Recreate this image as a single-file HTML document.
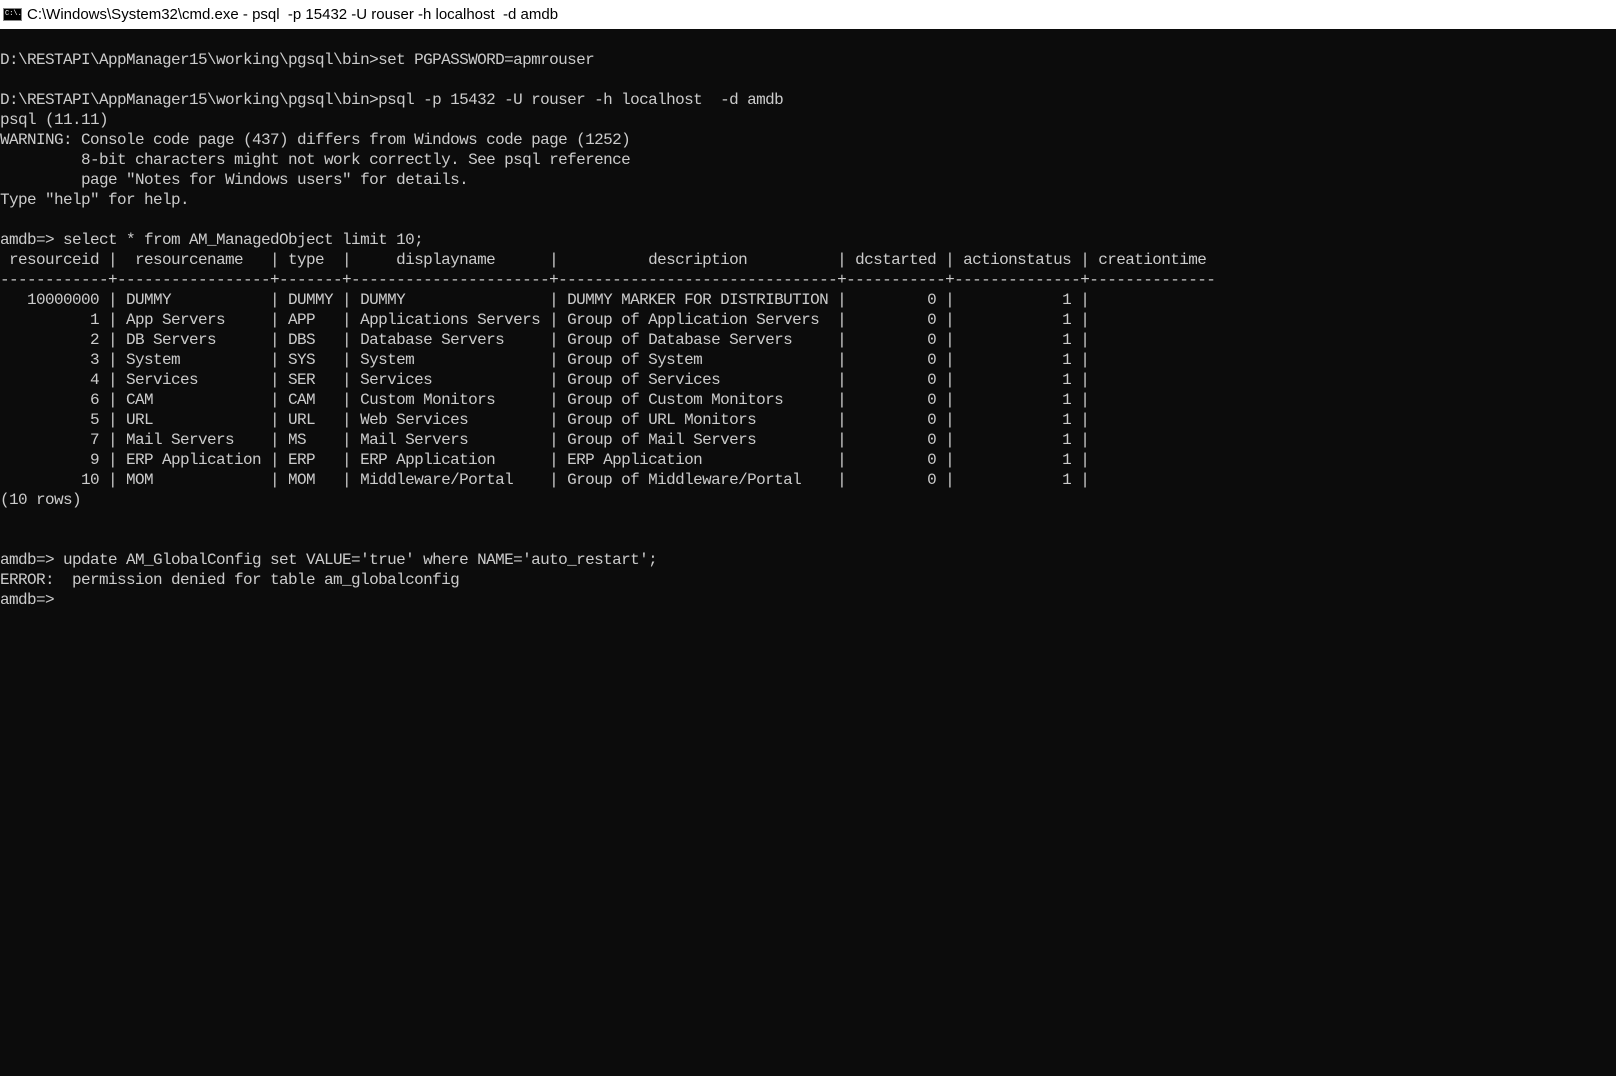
<!DOCTYPE html>
<html><head><meta charset="utf-8"><style>
html,body{margin:0;padding:0;width:1616px;height:1076px;background:#0c0c0c;overflow:hidden}
.title{position:absolute;left:0;top:0;width:1616px;height:29px;background:#fff;font-family:"Liberation Sans",sans-serif;font-size:15px;color:#000;line-height:29px}
.title span{position:absolute;left:27px;top:0}
.icon{position:absolute;left:3px;top:8px;width:19px;height:13px;background:#000;border:1px solid #888;box-sizing:border-box}
.icon:after{content:"C:\\.";position:absolute;left:1px;top:-9px;color:#fff;font-size:7px;font-family:"Liberation Mono",monospace}
pre{position:absolute;left:0;top:30px;margin:0;font-family:"Liberation Mono",monospace;font-size:16px;letter-spacing:-0.6px;line-height:20px;color:#cccccc;white-space:pre}
</style></head><body>
<div class="title"><div class="icon"></div><span>C:\Windows\System32\cmd.exe - psql&nbsp; -p 15432 -U rouser -h localhost&nbsp; -d amdb</span></div>
<pre>

D:\RESTAPI\AppManager15\working\pgsql\bin&gt;set PGPASSWORD=apmrouser

D:\RESTAPI\AppManager15\working\pgsql\bin&gt;psql -p 15432 -U rouser -h localhost  -d amdb
psql (11.11)
WARNING: Console code page (437) differs from Windows code page (1252)
         8-bit characters might not work correctly. See psql reference
         page "Notes for Windows users" for details.
Type "help" for help.

amdb=&gt; select * from AM_ManagedObject limit 10;
 resourceid |  resourcename   | type  |     displayname      |          description          | dcstarted | actionstatus | creationtime
------------+-----------------+-------+----------------------+-------------------------------+-----------+--------------+--------------
   10000000 | DUMMY           | DUMMY | DUMMY                | DUMMY MARKER FOR DISTRIBUTION |         0 |            1 |
          1 | App Servers     | APP   | Applications Servers | Group of Application Servers  |         0 |            1 |
          2 | DB Servers      | DBS   | Database Servers     | Group of Database Servers     |         0 |            1 |
          3 | System          | SYS   | System               | Group of System               |         0 |            1 |
          4 | Services        | SER   | Services             | Group of Services             |         0 |            1 |
          6 | CAM             | CAM   | Custom Monitors      | Group of Custom Monitors      |         0 |            1 |
          5 | URL             | URL   | Web Services         | Group of URL Monitors         |         0 |            1 |
          7 | Mail Servers    | MS    | Mail Servers         | Group of Mail Servers         |         0 |            1 |
          9 | ERP Application | ERP   | ERP Application      | ERP Application               |         0 |            1 |
         10 | MOM             | MOM   | Middleware/Portal    | Group of Middleware/Portal    |         0 |            1 |
(10 rows)


amdb=&gt; update AM_GlobalConfig set VALUE='true' where NAME='auto_restart';
ERROR:  permission denied for table am_globalconfig
amdb=&gt;
</pre>
</body></html>
